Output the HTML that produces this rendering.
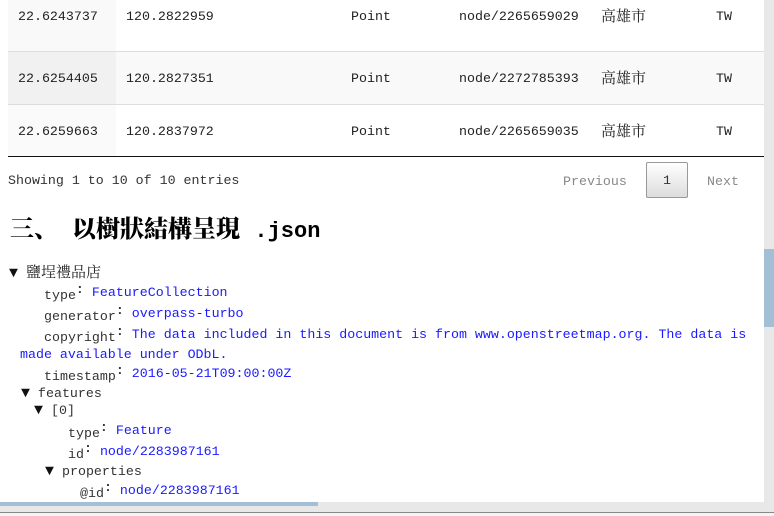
<!DOCTYPE html>
<html><head><meta charset="utf-8"><style>
*{margin:0;padding:0;box-sizing:border-box}
body{width:774px;height:516px;overflow:hidden;background:#fff;position:relative;font-family:"Liberation Mono","Noto Sans CJK TC",monospace;font-size:13.3px;color:#222}
.a{position:absolute;white-space:nowrap;line-height:16px}
.bg{position:absolute}
.k{color:#333}
.v{color:#1a1aff}
.c{font-weight:bold;color:#333;position:relative;top:-3px}
.cj{font-family:"Liberation Serif","Noto Serif CJK SC",serif;font-size:15px}
.t{font-size:15px;color:#111}
</style></head><body>
<div class="bg" style="left:8px;top:0;width:108px;height:51px;background:#f9f9f9"></div>
<div class="bg" style="left:8px;top:51px;width:756px;height:53px;background:#f9f9f9"></div>
<div class="bg" style="left:8px;top:51px;width:108px;height:53px;background:#f1f1f1"></div>
<div class="bg" style="left:8px;top:104px;width:108px;height:53px;background:#fafafa"></div>
<div class="bg" style="left:8px;top:51px;width:756px;height:1px;background:#ddd"></div>
<div class="bg" style="left:8px;top:104px;width:756px;height:1px;background:#ddd"></div>
<div class="bg" style="left:8px;top:156px;width:756px;height:1px;background:#111"></div>

<div class="a" style="left:18px;top:9px">22.6243737</div>
<div class="a" style="left:126px;top:9px">120.2822959</div>
<div class="a" style="left:351px;top:9px">Point</div>
<div class="a" style="left:459px;top:9px">node/2265659029</div>
<div class="a cj" style="left:601px;top:9px">高雄市</div>
<div class="a" style="left:716px;top:9px">TW</div>

<div class="a" style="left:18px;top:71px">22.6254405</div>
<div class="a" style="left:126px;top:71px">120.2827351</div>
<div class="a" style="left:351px;top:71px">Point</div>
<div class="a" style="left:459px;top:71px">node/2272785393</div>
<div class="a cj" style="left:601px;top:71px">高雄市</div>
<div class="a" style="left:716px;top:71px">TW</div>

<div class="a" style="left:18px;top:124px">22.6259663</div>
<div class="a" style="left:126px;top:124px">120.2837972</div>
<div class="a" style="left:351px;top:124px">Point</div>
<div class="a" style="left:459px;top:124px">node/2265659035</div>
<div class="a cj" style="left:601px;top:124px">高雄市</div>
<div class="a" style="left:716px;top:124px">TW</div>

<div class="a" style="left:8px;top:173px;color:#333">Showing 1 to 10 of 10 entries</div>
<div class="a" style="left:563px;top:174px;color:#888">Previous</div>
<div class="bg" style="left:646px;top:162px;width:42px;height:36px;border:1px solid #999;border-radius:2px;background:linear-gradient(#fff,#ddd)"></div>
<div class="a" style="left:663px;top:173px;color:#333">1</div>
<div class="a" style="left:707px;top:174px;color:#888">Next</div>

<div class="a" style="left:10px;top:218px;font-size:24px;line-height:28px;font-weight:900;font-family:'Liberation Mono','Noto Serif CJK SC',serif;color:#000">三、<span style="margin-left:14px">以樹狀結構呈現</span> <span style="font-size:22px">.json</span></div>

<div class="a" style="left:9px;top:265px"><span class="t">▼</span> <span class="cj">鹽埕禮品店</span></div>
<div class="a" style="left:44px;top:285px"><span class="k" style="position:relative;top:3px">type</span><span class="c">:</span> <span class="v">FeatureCollection</span></div>
<div class="a" style="left:44px;top:306px"><span class="k" style="position:relative;top:3px">generator</span><span class="c">:</span> <span class="v">overpass-turbo</span></div>
<div class="a" style="left:44px;top:327px"><span class="k" style="position:relative;top:3px">copyright</span><span class="c">:</span> <span class="v">The data included in this document is from www.openstreetmap.org. The data is</span></div>
<div class="a v" style="left:20px;top:347px">made available under ODbL.</div>
<div class="a" style="left:44px;top:366px"><span class="k" style="position:relative;top:3px">timestamp</span><span class="c">:</span> <span class="v">2016-05-21T09:00:00Z</span></div>
<div class="a" style="left:21px;top:386px"><span class="t">▼</span> <span class="k">features</span></div>
<div class="a" style="left:34px;top:403px"><span class="t">▼</span> <span class="k">[0]</span></div>
<div class="a" style="left:68px;top:423px"><span class="k" style="position:relative;top:3px">type</span><span class="c">:</span> <span class="v">Feature</span></div>
<div class="a" style="left:68px;top:444px"><span class="k" style="position:relative;top:3px">id</span><span class="c">:</span> <span class="v">node/2283987161</span></div>
<div class="a" style="left:45px;top:464px"><span class="t">▼</span> <span class="k">properties</span></div>
<div class="a" style="left:80px;top:483px"><span class="k" style="position:relative;top:3px">@id</span><span class="c">:</span> <span class="v">node/2283987161</span></div>

<div class="bg" style="left:764px;top:0;width:10px;height:502px;background:#e8e8e8"></div>
<div class="bg" style="left:764px;top:249px;width:10px;height:78px;background:#a3bfd6"></div>
<div class="bg" style="left:0;top:502px;width:774px;height:10px;background:#e8e8e8"></div>
<div class="bg" style="left:0;top:502px;width:318px;height:4px;background:#a3bfd6"></div>
<div class="bg" style="left:0;top:512px;width:774px;height:4px;border-top:1px solid #888;background:#f4f4f4"></div>
</body></html>
